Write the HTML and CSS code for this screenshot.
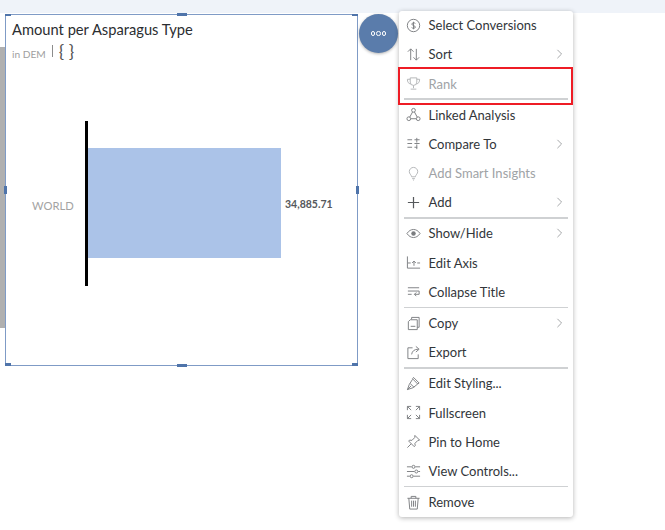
FILE: index.html
```html
<!DOCTYPE html>
<html lang="en">
<head>
<meta charset="utf-8">
<title>Amount per Asparagus Type</title>
<link rel="stylesheet" href="styles.css">
</head>
<body>
<div class="topbar"></div>
<div class="workspace">
  <div class="strip"></div>
  <section class="card">
    <span class="h tl"></span><span class="h tm"></span><span class="h tr"></span>
    <span class="h ml"></span><span class="h mr"></span>
    <span class="h bl"></span><span class="h bm"></span><span class="h br"></span>
    <h1 class="title">Amount per Asparagus Type</h1>
    <div class="sub"><span class="unit">in DEM</span><span class="pipe"></span><span class="braces">{ }</span></div>
    <div class="chart">
      <span class="cat">WORLD</span>
      <span class="axis"></span>
      <span class="bar"></span>
      <span class="val">34,885.71</span>
    </div>
  </section>
</div>
<button class="fab" aria-label="More"><i></i><i></i><i></i></button>
<nav class="menu">
  <div class="item"><svg class="ic" viewBox="0 0 16 16"><circle cx="8" cy="8" r="6.6"/><path d="M10 5.8C9.4 5 6.2 4.8 6.2 6.5S10 8 10 9.7 6.8 11.2 6 10.2M8 4v8"/></svg><span>Select Conversions</span></div>
  <div class="item"><svg class="ic" viewBox="0 0 16 16"><path d="M5 14V2M2 5l3-3 3 3M11 2v12M8 11l3 3 3-3"/></svg><span>Sort</span><svg class="chev" viewBox="0 0 8 12"><path d="M1.500 1l5 5-5 5"/></svg></div>
  <div class="item off"><svg class="ic" viewBox="0 0 16 16"><path d="M4.500 2h7v4.500a3.500 3.500 0 0 1-7 0zM4.500 3.500H1.500c0 3 1 4.500 3.500 5M11.500 3.500h3c0 3-1 4.500-3.500 5M8 10v3M5 14h6"/></svg><span>Rank</span></div>
  <hr class="sep">
  <div class="item"><svg class="ic" viewBox="0 0 16 16"><circle cx="8" cy="3.500" r="2"/><circle cx="3" cy="12.500" r="2"/><circle cx="13" cy="12.500" r="2"/><path d="M7 5.300l-3 5.500M9 5.300l3 5.500M5 12.500h6"/></svg><span>Linked Analysis</span></div>
  <div class="item"><svg class="ic" viewBox="0 0 16 16"><path d="M1.500 4h5M1.500 8h5M1.500 12h5M9 4h5.500M9 8h5.500M9 12h3M11.500 2v5M11.500 9v5"/></svg><span>Compare To</span><svg class="chev" viewBox="0 0 8 12"><path d="M1.500 1l5 5-5 5"/></svg></div>
  <div class="item off"><svg class="ic" viewBox="0 0 16 16"><path d="M6 11.500C5.500 9 3.500 8.500 3.500 6a4.500 4.500 0 0 1 9 0c0 2.500-2 3-2.500 5.500zM6.500 13.500h3M7.500 15h1"/></svg><span>Add Smart Insights</span></div>
  <div class="item"><svg class="ic dark" viewBox="0 0 16 16"><path d="M8 2v12M2 8h12"/></svg><span>Add</span><svg class="chev" viewBox="0 0 8 12"><path d="M1.500 1l5 5-5 5"/></svg></div>
  <hr class="sep">
  <div class="item"><svg class="ic" viewBox="0 0 16 16"><path d="M1 8c2-3 4.500-4.300 7-4.300S13 5 15 8c-2 3-4.500 4.300-7 4.300S3 11 1 8z"/><circle class="fill" cx="8" cy="8" r="2.400"/></svg><span>Show/Hide</span><svg class="chev" viewBox="0 0 8 12"><path d="M1.500 1l5 5-5 5"/></svg></div>
  <div class="item"><svg class="ic" viewBox="0 0 16 16"><path d="M1.500 1.500v12.500h13.500M2 8.500h3M12 8.500h3M8.500 11.500V6.500M6.500 8.500l2-2 2 2"/></svg><span>Edit Axis</span></div>
  <div class="item"><svg class="ic" viewBox="0 0 16 16"><path d="M2 4h12M2 7.500h12M2 11h4M14 7.500v3.500H9M11 9l-2 2 2 2"/></svg><span>Collapse Title</span></div>
  <hr class="sep">
  <div class="item"><svg class="ic" viewBox="0 0 16 16"><path d="M6 3.500V1.500h8v10.500h-2M4.500 4H12v10.500H2.500V6zM5 11h5"/></svg><span>Copy</span><svg class="chev" viewBox="0 0 8 12"><path d="M1.500 1l5 5-5 5"/></svg></div>
  <div class="item"><svg class="ic" viewBox="0 0 16 16"><path d="M7 3H2v11.500h11V10M6 10c.5-3.500 3-5.500 7-5.500M10.500 1.500l3.500 3-3.500 3"/></svg><span>Export</span></div>
  <hr class="sep">
  <div class="item"><svg class="ic" viewBox="0 0 16 16"><path d="M8 1.500l6 6-1.500 1-5.500-5.500zM7 3.500L3.500 9 1.500 14.500 7.500 12.500 12.500 8.500M1.500 14.500L5.500 10.500M4.500 8l4 4"/></svg><span>Edit Styling...</span></div>
  <div class="item"><svg class="ic" viewBox="0 0 16 16"><path d="M1.500 5.500v-4h4M1.500 1.500l4 4M14.500 5.500v-4h-4M14.500 1.500l-4 4M1.500 10.500v4h4M1.500 14.500l4-4M14.500 10.500v4h-4M14.500 14.500l-4-4"/></svg><span>Fullscreen</span></div>
  <div class="item"><svg class="ic" viewBox="0 0 16 16"><path d="M9.500 1.500l5 5-2 .5-3 3 .3 2.500-1 1-6-6 1-1 2.500.3 3-3zM5.500 10.500L1.500 14.500"/></svg><span>Pin to Home</span></div>
  <div class="item"><svg class="ic" viewBox="0 0 16 16"><path d="M1 3h5M10 3h5M1 8h8M13 8h2M1 13h3M8 13h7"/><circle cx="8" cy="3" r="1.600"/><circle cx="11" cy="8" r="1.600"/><circle cx="6" cy="13" r="1.600"/></svg><span>View Controls...</span></div>
  <hr class="sep">
  <div class="item"><svg class="ic" viewBox="0 0 16 16"><path d="M1.500 3.500h13M5.500 3.500V1.500h5v2M3 3.500l1 11.500h8l1-11.500M6 6v6.500M8 6v6.500M10 6v6.500"/></svg><span>Remove</span></div>
</nav>
<div class="mark"></div>
</body>
</html>
```
FILE: styles.css
```css
* { box-sizing: border-box; }
html, body { margin: 0; padding: 0; }
body {
  position: relative;
  width: 665px;
  height: 530px;
  overflow: hidden;
  background: #fff;
  font-family: "Lato", "Open Sans", sans-serif;
  color: #32363a;
}
.topbar { height: 13px; background: #eff3f9; }
.workspace { display: flex; padding-top: 1px; align-items: flex-start; }
.strip { width: 5px; height: 281px; margin-top: 33px; background: #b0b0b0; }
.card {
  position: relative;
  width: 353px;
  height: 352px;
  border: 1px solid #7f9bc6;
  background: #fff;
  padding: 5px 6px;
}
.h { position: absolute; background: #4f74aa; }
.tl, .tr, .bl, .br { width: 6px; height: 2px; }
.tl { left: -1px; top: -1px; }
.tr { right: -1px; top: -1px; }
.bl { left: -1px; bottom: -1px; height: 3px; }
.br { right: -1px; bottom: -1px; height: 3px; }
.tm, .bm { left: 171px; width: 10px; height: 3px; }
.tm { top: -2px; }
.bm { bottom: -2px; }
.ml, .mr { top: 171px; width: 3px; height: 8px; }
.ml { left: -2px; }
.mr { right: -2px; }
.title { margin: 0; font-size: 14.700px; line-height: 19px; font-weight: 400; color: #2b2e31; }
.sub { display: flex; align-items: center; height: 20px; margin-top: 3px; }
.unit { font-size: 10.200px; color: #a0a0a0; position: relative; top: 2px; }
.pipe { width: 1px; height: 12px; margin: 0 6px 0 6px; background: #8c8c8c; position: relative; top: -1px; }
.braces { font-size: 18px; line-height: 18px; font-weight: 400; color: #555; position: relative; top: -1px; }
.chart { display: flex; align-items: center; height: 165px; margin-top: 59px; }
.cat { width: 41px; margin-left: 20px; margin-right: 12px; padding-top: 3px; font-size: 11.200px; color: #a3a3a3; white-space: nowrap; }
.axis { width: 3px; height: 165px; background: #000; }
.bar { width: 193px; height: 110px; background: #abc3e8; margin-top: -2px; }
.val { margin-left: 4px; font-size: 10.500px; font-weight: 700; color: #55585b; white-space: nowrap; }
.fab {
  position: absolute;
  left: 359px;
  top: 14px;
  width: 39px;
  height: 39px;
  border: 0;
  padding: 0;
  border-radius: 50%;
  background: #5a7cab;
  box-shadow: 0 1px 3px rgba(0,0,0,.3);
  display: flex;
  align-items: center;
  justify-content: center;
  gap: 1px;
}
.fab i { width: 4.500px; height: 4.500px; border: 1.400px solid #fff; border-radius: 50%; }
.menu {
  position: absolute;
  left: 399px;
  top: 10.500px;
  width: 174px;
  height: 506.500px;
  background: #fff;
  border-radius: 3px;
  box-shadow: 0 1px 5px rgba(0,0,0,.3);
}
.item {
  display: flex;
  align-items: center;
  height: 29.250px;
  padding: 0 10px 0 7px;
  font-size: 13px;
  white-space: nowrap;
  color: #32363a;
}
.item.off { color: #a0a3a6; }
.ic { width: 15px; height: 15px; margin-right: 7.500px; flex: none; fill: none; stroke: #7b7d80; stroke-width: 1; }
.ic.dark { stroke: #55585b; stroke-width: 1.300; }
.off .ic { stroke: #b2b4b6; }
.ic .fill { fill: #7b7d80; stroke: none; }
.chev { width: 7px; height: 10px; margin-left: auto; fill: none; stroke: #a5a7a9; stroke-width: 1.200; }
.sep { height: 1.800px; margin: 0 5px; border: 0; background: #cfd1d3; }
.mark {
  position: absolute;
  left: 398px;
  top: 67px;
  width: 175px;
  height: 38px;
  border: 2px solid #ee1c25;
}
```
